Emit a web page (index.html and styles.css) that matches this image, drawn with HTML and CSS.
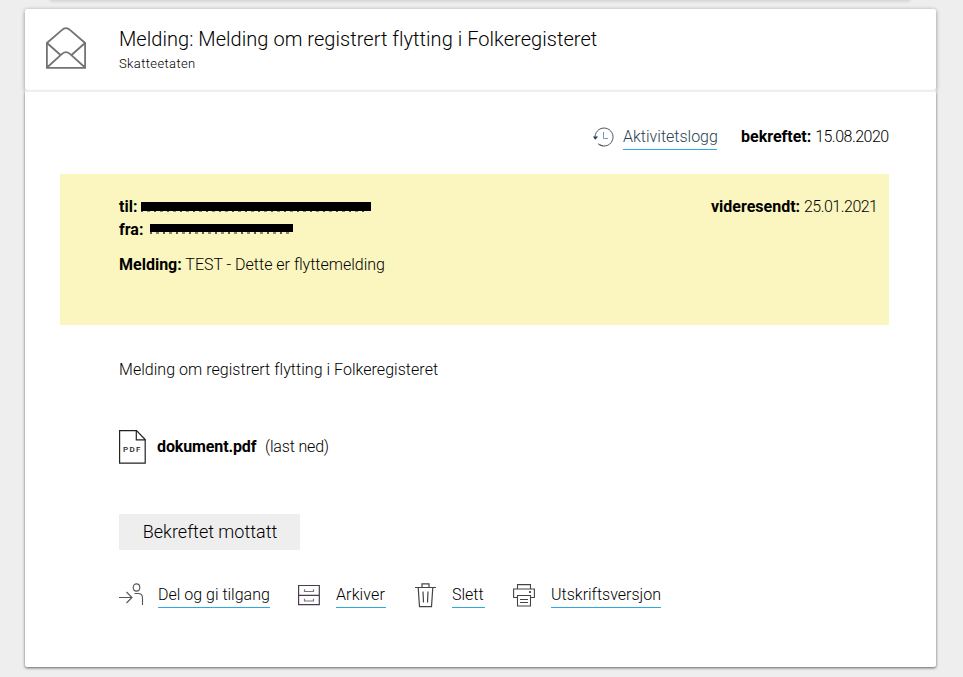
FILE: index.html
```
<!DOCTYPE html>
<html lang="no">
<head>
<meta charset="utf-8">
<title>Melding om registrert flytting</title>
<link rel="stylesheet" href="styles.css">
</head>
<body>
<div class="previous"></div>
<main>
  <header class="card heading">
    <svg class="mail" width="42" height="44" viewBox="0 0 42 44" fill="none" stroke="#737373" stroke-width="1.8"><path d="M1.9 17V41.9H40.1V17L25.2 4.2Q21 .1 16.8 4.2ZM2 17L15.5 29M40 17L26.5 29M2 41.5L16.2 28.6Q21 23.8 25.8 28.6L40 41.5"/></svg>
    <div>
      <h1>Melding: Melding om registrert flytting i Folkeregisteret</h1>
      <p class="sender">Skatteetaten</p>
    </div>
  </header>
  <section class="card content">
    <div class="meta">
      <svg width="21" height="20" viewBox="0 0 21 20" fill="none" stroke="#4b5965" stroke-width="1"><path d="M2.2 11.7A9 9 0 1 1 5 16.7M6.3 17.4A9 9 0 0 0 10 18.8"/><path d="M0 9.6L2.2 12.8L5.2 9.6Z" fill="#263e50" stroke="none"/><path stroke="#7896ac" d="M10.5 5V11.5H15"/></svg>
      <a class="link log" href="#">Aktivitetslogg</a>
      <p class="confirmed"><b>bekreftet:</b> <span class="date">15.08.2020</span></p>
    </div>
    <div class="notice">
      <div>
        <p class="row"><b class="to">til:</b><span class="redacted first"></span></p>
        <p class="row"><b class="from">fra:</b><span class="redacted second"></span></p>
        <p class="message"><b>Melding:</b> TEST - Dette er flyttemelding</p>
      </div>
      <p class="forwarded"><b>videresendt:</b> <span class="date">25.01.2021</span></p>
    </div>
    <p class="description">Melding om registrert flytting i Folkeregisteret</p>
    <div class="attachment">
      <svg width="27" height="34" viewBox="0 0 27 34" fill="none" stroke="#222" stroke-width="1.2"><path d="M.6.6H17.5L26.2 9.5V33.2H.6ZM17.3.6V9.8H26.2"/><text x="4" y="22" textLength="17.5" class="pdf">PDF</text></svg>
      <b class="file">dokument.pdf</b><span class="download">(last ned)</span>
    </div>
    <button>Bekreftet mottatt</button>
    <nav>
      <svg width="25" height="24" viewBox="0 0 25 24" fill="none" stroke="#555" stroke-width="1.1"><path d="M0 14.5H13M7.5 9L13 14.5L7.5 20M15.5 10.5H19Q23.5 10.5 23.5 15V22"/><ellipse cx="17.5" cy="4.5" rx="3.3" ry="3.6"/></svg>
      <a class="link share" href="#">Del og gi tilgang</a>
      <svg class="i2" width="22" height="24" viewBox="0 0 22 24" fill="none" stroke="#493c50" stroke-width="1.2"><path d="M.6 2.5H21.3V21.7H.6ZM.6 12.4H21.3"/><path stroke="#777" d="M6.5 6.3V8.5H15.5V6.3M6.5 15.8V18H15.5V15.8"/></svg>
      <a class="link archive" href="#">Arkiver</a>
      <svg class="i3" width="21" height="25" viewBox="0 0 21 25" fill="none" stroke="#444" stroke-width="1.2"><path d="M0 4.5H21M7 4.3V.8H14V4.3M3.2 4.5L4.5 23.7H16.5L17.8 4.5M8 8.5L8.5 19.5M13 8.5L12.5 19.5"/></svg>
      <a class="link delete" href="#">Slett</a>
      <svg class="i4" width="22" height="24" viewBox="0 0 22 24" fill="none" stroke="#444" stroke-width="1.1"><path d="M4.5 6V1.6H17.5V6M4.5 14.5H.6V6H21.4V14.5H17.5M4.5 12.5H17.5V23H4.5ZM7 16.5H15M7 19.5H15"/><path d="M16 9H18" stroke="#222" stroke-width="1.6"/></svg>
      <a class="link print" href="#">Utskriftsversjon</a>
    </nav>
  </section>
</main>
</body>
</html>
```
FILE: styles.css
```
* { box-sizing: border-box; }
body { margin: 0; height: 677px; overflow: hidden; background: #eee; color: #000; font: 300 16px/22px Roboto, "Liberation Sans", sans-serif; }
p, h1 { margin: 0; }
svg { display: block; flex-shrink: 0; overflow: visible; }
b { font-weight: 700; color: #000; }
.previous { height: 1px; margin: -1px 53px 0 50px; background: #fff; box-shadow: 0 1px 3px rgba(0,0,0,.3); }
main { width: 911px; margin: 9px 0 0 25px; }
.card { background: #fff; border-radius: 2px; box-shadow: 0 1px 4px rgba(0,0,0,.4); }
.heading { height: 81px; display: flex; padding: 17px 0 0 20px; }
.heading > div { margin-left: 32px; }
h1 { font-size: 20px; line-height: 26px; font-weight: 300; letter-spacing: .045px; white-space: nowrap; }
.sender { font-size: 13px; line-height: 18px; font-weight: 300; margin-top: 3px; letter-spacing: .38px; }
.content { position: relative; height: 576px; margin-top: 1px; padding: 34px 47px 0 35px; box-shadow: 0 1px 3px rgba(0,0,0,.6); }
.content::before { content: ""; position: absolute; inset: -1px 0 auto; height: 2px; background: #eee; }
.meta { display: flex; justify-content: flex-end; height: 49px; line-height: 24px; }
.meta svg { margin-top: 2px; margin-right: 9px; }
.link { color: #000; text-decoration: none; white-space: nowrap; border-bottom: 1px solid #2ca8e5; height: 25px; line-height: 24px; flex-shrink: 0; }
.log { color: #293f50; width: 94px; margin-right: 24px; }
.confirmed { width: 148px; white-space: nowrap; }
.date { letter-spacing: -.52px; }
.notice { height: 151px; background: #fbf5bf; display: flex; justify-content: space-between; padding: 22px 12px 0 59px; }
.row { display: flex; height: 23px; }
.redacted { display: block; position: relative; background: #000; }
.redacted::after { content: ""; position: absolute; top: 100%; left: 0; right: 0; height: 1px; background: repeating-linear-gradient(90deg, #5c5946 0 2px, transparent 2px 6px, #8c886a 6px 9px, transparent 9px 13px); }
.first { width: 230px; height: 9px; margin: 6px 0 0 3px; }
.first::after { right: 7px; }
.second { width: 143px; height: 8px; margin: 5px 0 0 6px; }
.second::after { height: 2px; }
.to { width: 19px; }
.from { width: 25px; }
.message { margin-top: 12px; white-space: nowrap; }
.forwarded { width: 166px; white-space: nowrap; }
.description { margin: 34px 0 0 59px; letter-spacing: .035px; }
.attachment { display: flex; align-items: center; height: 34px; margin: 49px 0 0 59px; }
.pdf { font: 500 8px Roboto, sans-serif; fill: #222; stroke: none; }
.file { width: 99px; margin-left: 11px; letter-spacing: -.12px; }
.download { margin-left: 9px; letter-spacing: -.17px; }
button { display: block; width: 181px; height: 36px; margin: 50px 0 0 59px; padding: 0 0 1px 1px; border: 0; background: #eee; color: #000; font: 300 18px/34px Roboto, sans-serif; }
nav { display: flex; margin: 33px 0 0 59px; }
.share { width: 112px; margin-left: 14px; }
.i2 { margin-left: 28px; }
.archive { width: 50px; margin-left: 16px; letter-spacing: .12px; }
.i3 { margin-left: 29px; }
.delete { width: 33px; margin-left: 16px; }
.i4 { margin-left: 28px; }
.print { width: 110px; margin-left: 16px; }
```
